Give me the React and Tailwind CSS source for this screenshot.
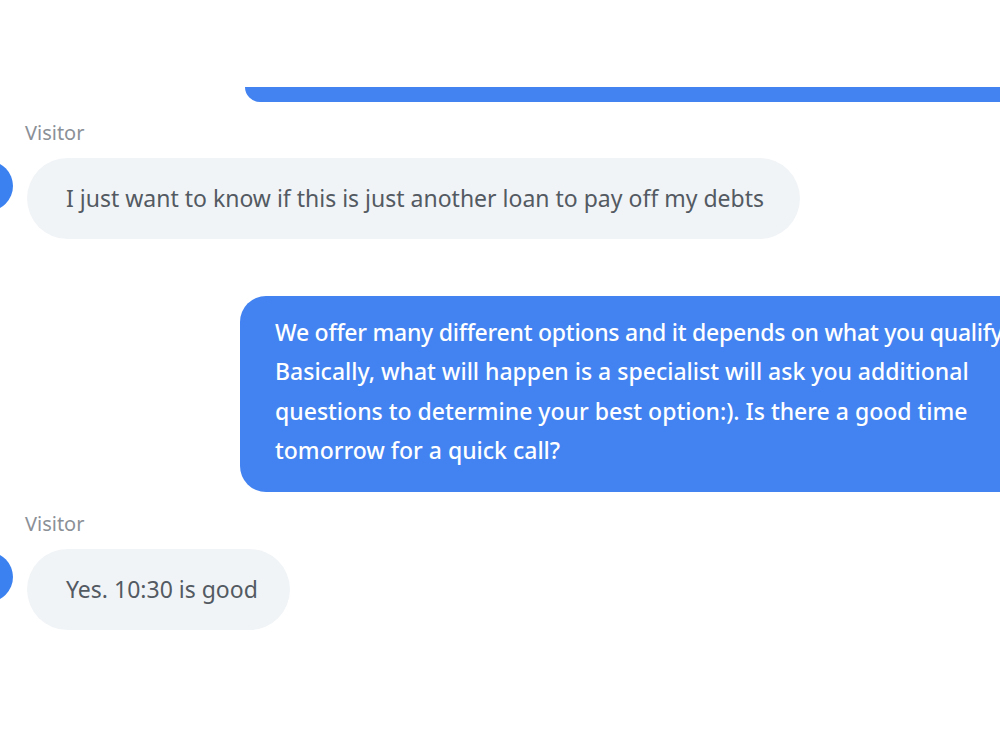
import React from "react";

const font = { fontFamily: '"Noto Sans", "Open Sans", sans-serif' };

const VisitorMessage = ({ text, width }) => (
  <div className="flex flex-col">
    <p className="ml-[25px] text-[20px] leading-[24px] text-[#8b9097]">Visitor</p>
    <div className="mt-[13px] flex items-start">
      <div className="-ml-[37px] mt-[3px] h-[50px] w-[50px] shrink-0 rounded-full bg-[#3b82f0]"></div>
      <div
        className={`ml-[14px] flex h-[81px] items-center rounded-full bg-[#f1f4f7] pl-[39px] text-[23px] text-[#535a62] ${width}`}
      >
        {text}
      </div>
    </div>
  </div>
);

export default function App() {
  return (
    <div className="h-[750px] w-[1000px] overflow-hidden bg-white" style={font}>
      <div className="ml-[245px] mt-[87px] h-[15px] w-[800px] rounded-bl-[15px] bg-[#4283f1]"></div>

      <div className="mt-[19px]">
        <VisitorMessage
          text="I just want to know if this is just another loan to pay off my debts"
          width="w-[773px]"
        />
      </div>

      <div className="ml-[240px] mt-[57px] w-[800px] rounded-l-[26px] bg-[#4283f1] pb-[22px] pt-[17px] pl-[35px] text-[23px] font-medium leading-[39.3px] text-white">
        <p className="whitespace-nowrap tracking-[-0.25px]">We offer many different options and it depends on what you qualify for.</p>
        <p>Basically, what will happen is a specialist will ask you additional</p>
        <p>questions to determine your best option:). Is there a good time</p>
        <p>tomorrow for a quick call?</p>
      </div>

      <div className="mt-[20px]">
        <VisitorMessage text="Yes. 10:30 is good" width="w-[263px]" />
      </div>
    </div>
  );
}
